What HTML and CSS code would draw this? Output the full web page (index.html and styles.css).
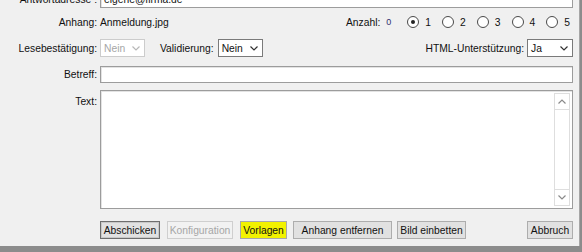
FILE: index.html
```html
<!DOCTYPE html>
<html lang="de">

<head>
    <meta charset="UTF-8">
    <meta name="viewport" content="width=device-width, initial-scale=1.0">
    <title>E-Mail versenden</title>
    <link rel="stylesheet" href="styles.css">
</head>

<body>
    <div class="window">
        <div class="form">

            <div class="row row-antwort">
                <div class="lbl">Antwortadresse :</div>
                <div class="edit">eigene@firma.de</div>
            </div>

            <div class="row row-anhang">
                <div class="lbl">Anhang:</div>
                <div class="value">Anmeldung.jpg</div>
                <div class="anzahl">
                    <span class="anzahl-lbl">Anzahl:</span>
                    <span class="anzahl-num">0</span>
                    <div class="opt"><span class="radio checked"></span><span>1</span></div>
                    <div class="opt"><span class="radio"></span><span>2</span></div>
                    <div class="opt"><span class="radio"></span><span>3</span></div>
                    <div class="opt"><span class="radio"></span><span>4</span></div>
                    <div class="opt"><span class="radio"></span><span>5</span></div>
                </div>
            </div>

            <div class="row row-options">
                <div class="lbl">Lesebestätigung:</div>
                <div class="combo disabled">
                    <span>Nein</span>
                    <svg width="8" height="5" viewBox="0 0 8 5"><polyline points="0.5,0.5 4,4 7.5,0.5" /></svg>
                </div>
                <div class="sub-lbl">Validierung:</div>
                <div class="combo">
                    <span>Nein</span>
                    <svg width="8" height="5" viewBox="0 0 8 5"><polyline points="0.5,0.5 4,4 7.5,0.5" /></svg>
                </div>
                <div class="html-lbl">HTML-Unterstützung:</div>
                <div class="combo">
                    <span>Ja</span>
                    <svg width="8" height="5" viewBox="0 0 8 5"><polyline points="0.5,0.5 4,4 7.5,0.5" /></svg>
                </div>
            </div>

            <div class="row row-betreff">
                <div class="lbl">Betreff:</div>
                <div class="edit"></div>
            </div>

            <div class="row row-text">
                <div class="lbl">Text:</div>
                <div class="memo">
                    <div class="scrollbar">
                        <div class="arrow">
                            <svg width="8" height="5" viewBox="0 0 8 5"><polyline points="0.5,4.5 4,1 7.5,4.5" /></svg>
                        </div>
                        <div class="track"></div>
                        <div class="arrow arrow-down">
                            <svg width="8" height="5" viewBox="0 0 8 5"><polyline points="0.5,0.5 4,4 7.5,0.5" /></svg>
                        </div>
                    </div>
                </div>
            </div>

            <div class="row row-buttons">
                <div class="btn btn-default w-abschicken">Abschicken</div>
                <div class="btn btn-disabled w-konfig">Konfiguration</div>
                <div class="btn btn-yellow w-vorlagen">Vorlagen</div>
                <div class="btn w-anhang">Anhang entfernen</div>
                <div class="btn w-bild">Bild einbetten</div>
                <div class="btn w-abbruch">Abbruch</div>
            </div>

        </div>
    </div>
</body>

</html>
```

FILE: styles.css
```css
body {
    margin: 0;
    background-color: #8c8c8c;
    font-family: "Liberation Sans", Arial, sans-serif;
    font-size: 10.3px;
    color: #111;
}

.window {
    width: 580px;
    height: 246px;
    box-sizing: border-box;
    border-right: 1px solid #a6a6a6;
    background-color: #f0f0f0;
    overflow: hidden;
}

.form {
    margin-top: -10px;
    padding-right: 6px;
}

.row {
    display: flex;
    align-items: center;
}

.lbl {
    width: 97px;
    flex: none;
    margin-right: 3px;
    text-align: right;
    white-space: nowrap;
}

.edit {
    flex: 1;
    height: 100%;
    box-sizing: border-box;
    border: 1px solid #9c9c9c;
    box-shadow: inset 1px 1px 0 #e3e3e3;
    background-color: #fff;
    padding: 2px 3px;
    display: flex;
    align-items: center;
}

.row-antwort {
    height: 18px;
}

.row-anhang {
    height: 28px;
}

.value {
    white-space: nowrap;
}

.anzahl {
    margin-left: auto;
    margin-right: 3px;
    display: flex;
    align-items: center;
}

.anzahl-num {
    margin-left: 6px;
    margin-right: 5px;
    font-size: 9px;
    color: #2e2e6e;
}

.opt {
    display: flex;
    align-items: center;
    gap: 6px;
    margin-left: 11px;
}

.radio {
    width: 12px;
    height: 12px;
    box-sizing: border-box;
    border: 1px solid #4a4a4a;
    border-radius: 50%;
    background-color: #fff;
    display: flex;
    align-items: center;
    justify-content: center;
}

.radio.checked::after {
    content: "";
    width: 4px;
    height: 4px;
    border-radius: 50%;
    background-color: #222;
}

.row-options {
    margin-top: 3px;
    height: 18px;
}

.combo {
    height: 18px;
    box-sizing: border-box;
    border: 1px solid #7a7a7a;
    background-color: #fff;
    display: flex;
    align-items: center;
    justify-content: space-between;
    padding: 0 4px 0 3px;
}

.combo svg polyline,
.arrow svg polyline {
    fill: none;
    stroke: #333;
    stroke-width: 1.2;
}

.combo.disabled {
    border-color: #cccccc;
    color: #a6a6a6;
}

.combo.disabled svg polyline {
    stroke: #b8b8b8;
}

.row-options .combo {
    width: 45px;
}

.row-options .combo:last-child {
    width: 46px;
}

.sub-lbl {
    margin-left: 15px;
    margin-right: 4px;
}

.html-lbl {
    margin-left: auto;
    margin-right: 3px;
}

.row-betreff {
    margin-top: 9px;
    height: 17px;
}

.row-text {
    margin-top: 7px;
    height: 119px;
    align-items: flex-start;
}

.row-text .lbl {
    padding-top: 6px;
}

.memo {
    flex: 1;
    height: 100%;
    box-sizing: border-box;
    border: 1px solid #9c9c9c;
    box-shadow: inset 1px 1px 0 #e3e3e3;
    background-color: #fff;
    padding: 2px;
    display: flex;
    justify-content: flex-end;
}

.scrollbar {
    width: 16px;
    box-sizing: border-box;
    border: 1px solid #dedede;
    display: flex;
    flex-direction: column;
}

.arrow {
    height: 15px;
    border-bottom: 1px solid #dedede;
    display: flex;
    align-items: center;
    justify-content: center;
}

.arrow svg polyline {
    stroke: #8a8a8a;
}

.arrow-down {
    border-bottom: none;
    border-top: 1px solid #dedede;
}

.track {
    flex: 1;
}

.row-buttons {
    margin-top: 12px;
    height: 18px;
    padding-left: 100px;
}

.btn {
    height: 18px;
    box-sizing: border-box;
    border: 1px solid #adadad;
    background-color: #e1e1e1;
    display: flex;
    align-items: center;
    justify-content: center;
    white-space: nowrap;
}

.btn-default {
    border-color: #6e6e6e;
    box-shadow: inset 0 0 0 1px #c8c8c8;
}

.btn-disabled {
    border-color: #cfcfcf;
    background-color: #f2f2f2;
    color: #a6a6a6;
}

.btn-yellow {
    background-color: #f2f200;
    border-color: #a8a8a8;
}

.w-abschicken {
    width: 60px;
}

.w-konfig {
    width: 66px;
    margin-left: 7px;
}

.w-vorlagen {
    width: 47px;
    margin-left: 7px;
}

.w-anhang {
    width: 99px;
    margin-left: 6px;
}

.w-bild {
    width: 69px;
    margin-left: 5px;
}

.w-abbruch {
    width: 46px;
    margin-left: auto;
}
```
